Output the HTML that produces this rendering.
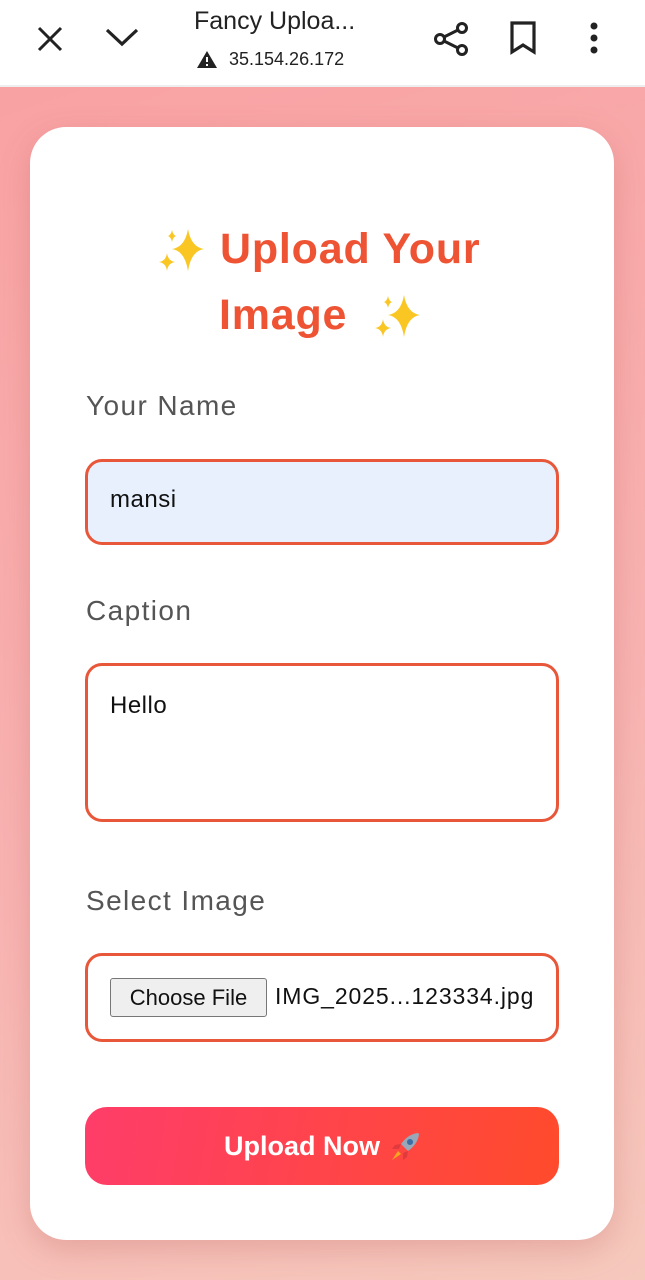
<!DOCTYPE html>
<html><head><meta charset="utf-8"><style>
*{box-sizing:border-box;margin:0;padding:0}
body{width:645px;height:1280px;overflow:hidden;font-family:"Liberation Sans",sans-serif;background:linear-gradient(160deg,#f9a0a2 0%,#f8b4b2 60%,#f6c9bd 100%);position:relative}
.bar{position:absolute;left:0;top:0;width:645px;height:87px;background:#fff;border-bottom:2px solid #eee}
.card{position:absolute;left:30px;top:127px;width:584px;height:1113px;background:#fff;border-radius:36px;box-shadow:0 10px 30px rgba(180,80,80,.25)}
.t{position:absolute;font-weight:bold;font-size:43px;color:#ee5334;letter-spacing:0.8px;white-space:nowrap}
.lbl{position:absolute;left:86px;font-size:28px;color:#555;letter-spacing:1.4px}
.box{position:absolute;left:85px;width:474px;border:3px solid #e9573a;border-radius:17px;background:#fff}
.txt{position:absolute;left:110px;font-size:24px;color:#111;letter-spacing:0.5px}
</style></head><body>
<div class="bar">
<svg style="position:absolute;left:36px;top:25px" width="28" height="28" viewBox="0 0 28 28"><path d="M3 3L25 25M25 3L3 25" stroke="#222" stroke-width="3"/></svg>
<svg style="position:absolute;left:105px;top:27px" width="34" height="20" viewBox="0 0 34 20"><path d="M2 3L17 17L32 3" stroke="#222" stroke-width="3.2" fill="none"/></svg>
<div style="position:absolute;left:194px;top:7px;font-size:25px;color:#222">Fancy Uploa...</div>
<svg style="position:absolute;left:197px;top:51px" width="20" height="17" viewBox="0 0 20 17"><path d="M10 0L20 17H0Z" fill="#222"/><rect x="9" y="6" width="2" height="5" fill="#fff"/><rect x="9" y="13" width="2" height="2" fill="#fff"/></svg>
<div style="position:absolute;left:229px;top:49px;font-size:18px;color:#222">35.154.26.172</div>
<svg style="position:absolute;left:432px;top:20px" width="38" height="38" viewBox="0 0 38 38"><circle cx="30" cy="8" r="4.5" fill="none" stroke="#222" stroke-width="3"/><circle cx="8" cy="19" r="4.5" fill="none" stroke="#222" stroke-width="3"/><circle cx="30" cy="30" r="4.5" fill="none" stroke="#222" stroke-width="3"/><path d="M12 17L26 10M12 21L26 28" stroke="#222" stroke-width="3"/></svg>
<svg style="position:absolute;left:509px;top:21px" width="28" height="34" viewBox="0 0 28 34"><path d="M3 2H25V31L14 24L3 31Z" fill="none" stroke="#222" stroke-width="3.2"/></svg>
<svg style="position:absolute;left:588px;top:22px" width="12" height="32" viewBox="0 0 12 32"><circle cx="6" cy="4" r="3.5" fill="#222"/><circle cx="6" cy="16" r="3.5" fill="#222"/><circle cx="6" cy="28" r="3.5" fill="#222"/></svg>
</div>
<div class="card"></div>
<svg style="position:absolute;left:156px;top:227px" width="50" height="48" viewBox="0 0 50 48"><path d="M32 2Q35 20 48 22Q35 24 32 44Q29 24 16 22Q29 20 32 2Z" fill="#f9c623"/><path d="M11 26Q12 34 19 35Q12 36 11 44Q10 36 3 35Q10 34 11 26Z" fill="#f9c623"/><path d="M16 3Q17 8 20 9Q17 10 16 15Q15 10 12 9Q15 8 16 3Z" fill="#f9c623"/></svg>
<svg style="position:absolute;left:372px;top:293px" width="50" height="48" viewBox="0 0 50 48"><path d="M32 2Q35 20 48 22Q35 24 32 44Q29 24 16 22Q29 20 32 2Z" fill="#f9c623"/><path d="M11 26Q12 34 19 35Q12 36 11 44Q10 36 3 35Q10 34 11 26Z" fill="#f9c623"/><path d="M16 3Q17 8 20 9Q17 10 16 15Q15 10 12 9Q15 8 16 3Z" fill="#f9c623"/></svg>
<div class="t" style="top:225px;left:220px">Upload Your</div>
<div class="t" style="top:291px;left:219px">Image</div>
<div class="lbl" style="top:390px">Your Name</div>
<div class="box" style="top:459px;height:86px;background:#e8f0fe"></div>
<div class="txt" style="top:486px">mansi</div>
<div class="lbl" style="top:595px">Caption</div>
<div class="box" style="top:663px;height:159px"></div>
<div class="txt" style="top:692px">Hello</div>
<div class="lbl" style="top:885px">Select Image</div>
<div class="box" style="top:953px;height:89px"></div>
<div style="position:absolute;left:110px;top:978px;width:157px;height:39px;border:1px solid #777;border-radius:3px;background:#efefef;font-size:22px;color:#111;text-align:center;line-height:37px">Choose File</div>
<div class="txt" style="left:275px;top:983px;font-size:23px;letter-spacing:0.9px">IMG_2025...123334.jpg</div>
<div style="position:absolute;left:85px;top:1107px;width:474px;height:78px;border-radius:22px;background:linear-gradient(100deg,#ff3d6a,#ff4b2c);color:#fff;font-size:27px;font-weight:bold;line-height:78px;text-align:center;padding-right:40px">Upload Now</div>
<svg style="position:absolute;left:388px;top:1130px" width="34" height="34" viewBox="0 0 34 34"><path d="M30 3Q20 4 13 14L20 21Q30 14 31 4Z" fill="#9aa7b8"/><circle cx="22" cy="12" r="3" fill="#3a6ea5"/><path d="M13 14L7 15L4 19L11 19ZM20 21L19 27L15 30L15 23Z" fill="#e0393e"/><path d="M10 21L4 30L13 24Z" fill="#f7a520"/></svg>
</body></html>
